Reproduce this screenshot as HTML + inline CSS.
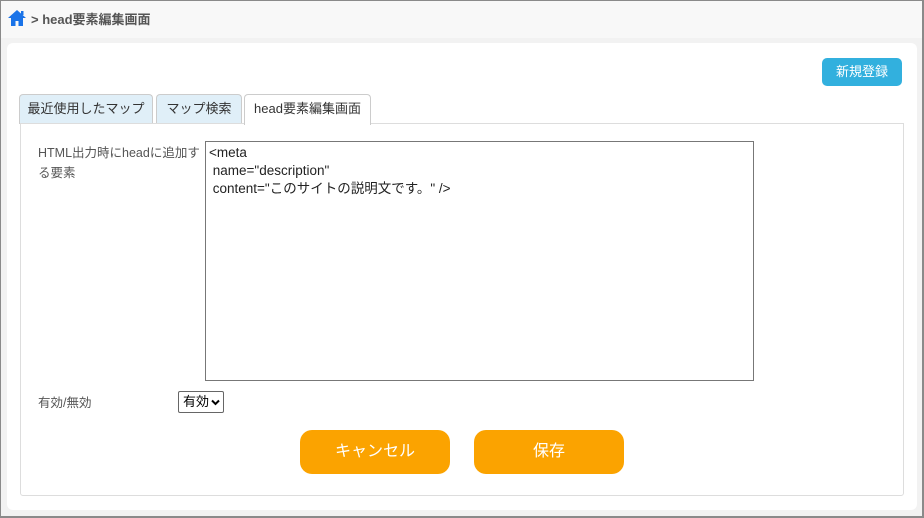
<!DOCTYPE html>
<html><head><meta charset="utf-8"><style>
*{box-sizing:border-box;margin:0;padding:0}
body{width:924px;height:518px;overflow:hidden;font-family:"Liberation Sans","Noto Sans CJK JP",sans-serif;background:#f2f2f2;position:relative}
.frame{position:absolute;left:0;top:0;width:924px;height:518px;border:1px solid #8a8a8a;border-right-width:2px;border-bottom-width:2px}
.top{position:absolute;left:1px;top:1px;width:921px;height:37px;background:#f8f8f8}
.crumb{position:absolute;left:31px;top:9px;font-size:13px;font-weight:bold;color:#555}
.panel{position:absolute;left:7px;top:43px;width:910px;height:467px;background:#fff;border-radius:6px}
.btn-new{position:absolute;left:822px;top:58px;width:80px;height:28px;background:#32b0de;border-radius:5px;color:#fff;font-size:13px;text-align:center;line-height:28px}
.tab{position:absolute;top:94px;height:30px;border:1px solid #ccc;border-bottom:none;border-radius:4px 4px 0 0;font-size:13px;color:#333;text-align:center;line-height:27px;background:#e0eff8}
.box{position:absolute;left:20px;top:123px;width:884px;height:373px;border:1px solid #ddd;border-radius:0 0 3px 3px}
.lbl{position:absolute;font-size:12.5px;color:#555;line-height:20px}
.ta{position:absolute;left:205px;top:141px;width:549px;height:240px;border:1px solid #777;font-size:13.5px;color:#222;padding:2px 3px;line-height:18px;white-space:pre}
.sel{position:absolute;left:178px;top:391px;width:46px;height:22px;border:1px solid #666;border-radius:2px;font-size:13px;color:#000;padding-left:4px;line-height:20px}
.ob{position:absolute;top:430px;width:150px;height:44px;background:#fba300;border-radius:12px;color:#fff;font-size:16px;text-align:center;line-height:44px}
</style></head><body>
<div class="top"></div>
<svg style="position:absolute;left:7px;top:9px" width="20" height="18" viewBox="0 0 20 18"><path d="M10 1L1 9h3v8h4.5v-5h3v5H16V9h3z" fill="#1a73e8"/><rect x="14" y="2" width="2.5" height="4" fill="#1a73e8"/></svg>
<div class="crumb">&gt; head要素編集画面</div>
<div class="panel"></div>
<div class="btn-new">新規登録</div>
<div class="tab" style="left:19px;width:134px">最近使用したマップ</div>
<div class="tab" style="left:156px;width:86px">マップ検索</div>
<div class="tab" style="left:244px;width:127px;background:#fff;height:31px;z-index:2">head要素編集画面</div>
<div class="box"></div>
<div class="lbl" style="left:38px;top:143px;width:165px">HTML出力時にheadに追加す<br>る要素</div>
<div class="ta">&lt;meta
 name="description"
 content="このサイトの説明文です。" /&gt;</div>
<div class="lbl" style="left:38px;top:393px">有効/無効</div>
<div class="sel">有効<svg style="position:absolute;right:3px;top:7px" width="9" height="7" viewBox="0 0 9 7"><path d="M1 1.5l3.5 3.5 3.5-3.5" stroke="#000" stroke-width="2" fill="none"/></svg></div>
<div class="ob" style="left:300px">キャンセル</div>
<div class="ob" style="left:474px">保存</div>
<div class="frame"></div>
</body></html>
